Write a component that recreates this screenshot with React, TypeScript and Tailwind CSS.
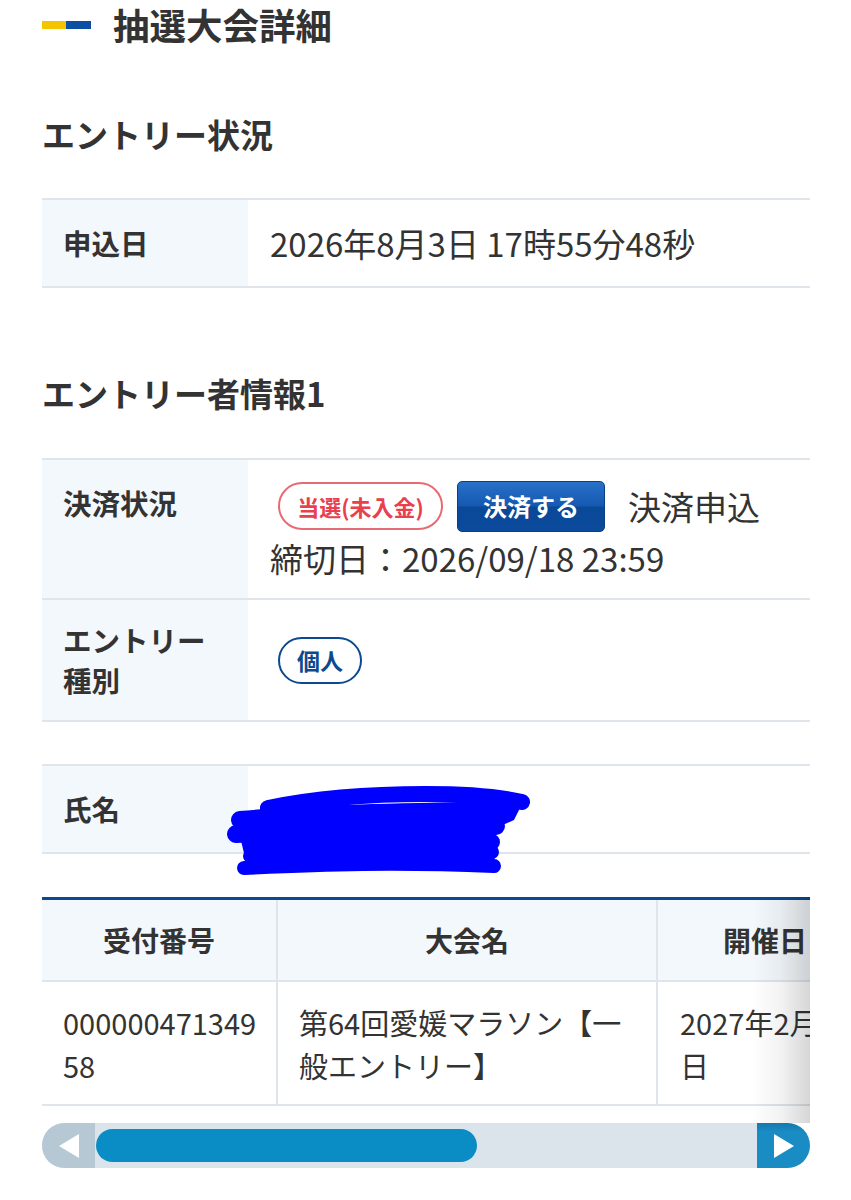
import React from "react";

const font = { fontFamily: '"Noto Sans CJK JP", "Noto Sans", sans-serif' };

function Scribble() {
  return (
    <svg
      className="absolute left-[184px] top-[18px] pointer-events-none"
      width="310"
      height="95"
      viewBox="0 0 310 95"
    >
      <g stroke="#0000ff" strokeLinecap="round" strokeLinejoin="round" fill="none">
        <path d="M42 24 C 90 14, 140 10, 200 10 C 240 10, 270 12, 296 18" strokeWidth="16" />
        <path d="M14 36 C 80 30, 180 28, 280 26" strokeWidth="18" />
        <path d="M10 50 C 90 44, 180 44, 270 42" strokeWidth="18" />
        <path d="M26 62 C 100 60, 190 58, 266 58" strokeWidth="16" />
        <path d="M24 72 C 100 70, 190 68, 266 68" strokeWidth="14" />
        <path d="M18 84 C 100 80, 170 78, 268 82" strokeWidth="14" />
      </g>
      <path
        d="M40 22 L296 20 L288 36 L270 44 L268 84 L22 86 L12 44 Z"
        fill="#0000ff"
      />
    </svg>
  );
}

export default function App() {
  return (
    <div className="bg-white w-[851px] min-h-[1200px] text-[#333]" style={font}>
      <div className="ml-[42px] w-[768px]">
        {/* Title */}
        <div className="flex items-center h-[50px]">
          <div className="flex h-[8px]">
            <div className="w-[24px] bg-[#f5c400]" />
            <div className="w-[25px] bg-[#0b4ea2]" />
          </div>
          <h1 className="ml-[22px] text-[36.5px] leading-[50px] font-bold">抽選大会詳細</h1>
        </div>

        {/* Entry status */}
        <h2 className="mt-[60px] text-[33px] leading-[48px] font-bold">エントリー状況</h2>
        <div className="mt-[40px] border-y-2 border-[#dfe5ea] flex">
          <div className="w-[206px] shrink-0 bg-[#f3f8fc] px-[21px] py-[23px] text-[28.5px] leading-[40px] font-bold">
            申込日
          </div>
          <div className="flex items-center pl-[22px] text-[33px] leading-[40px]">
            2026年8月3日 17時55分48秒
          </div>
        </div>

        {/* Entry person */}
        <h2 className="mt-[81px] text-[33px] leading-[48px] font-bold">エントリー者情報1</h2>
        <div className="mt-[41px] border-t-2 border-[#dfe5ea]">
          <div className="flex border-b-2 border-[#dfe5ea] h-[140px]">
            <div className="w-[206px] shrink-0 bg-[#f3f8fc] px-[21px] pt-[23px] text-[28.5px] leading-[40px] font-bold">
              決済状況
            </div>
            <div className="flex flex-col justify-center pl-[22px]">
              <div className="flex items-center">
                <span className="ml-[8px] w-[165px] h-[48px] rounded-full border-2 border-[#e86a73] text-[#e8404e] text-[22px] font-bold flex items-center justify-center">
                  当選(未入金)
                </span>
                <span className="ml-[14px] w-[148px] h-[51px] rounded-[5px] border border-[#0a3f85] bg-[linear-gradient(to_bottom,#2870c8_0%,#1659b2_48%,#0a4898_52%,#0b4a9c_100%)] text-white text-[24px] font-bold flex items-center justify-center">
                  決済する
                </span>
                <span className="ml-[23px] text-[33px] leading-[40px]">決済申込</span>
              </div>
              <div className="mt-[6px] text-[33px] leading-[40px]">締切日：2026/09/18 23:59</div>
            </div>
          </div>
          <div className="flex border-b-2 border-[#dfe5ea] h-[122px]">
            <div className="w-[206px] shrink-0 bg-[#f3f8fc] px-[21px] pt-[20px] text-[28.5px] leading-[40px] font-bold">
              エントリー
              <br />
              種別
            </div>
            <div className="flex items-center pl-[22px]">
              <span className="ml-[8px] w-[84px] h-[47px] rounded-full border-2 border-[#0b4a8f] text-[#0b4a8f] text-[23px] font-bold flex items-center justify-center">
                個人
              </span>
            </div>
          </div>
        </div>

        {/* Name */}
        <div className="relative mt-[42px] border-y-2 border-[#dfe5ea] flex">
          <div className="w-[206px] shrink-0 bg-[#f3f8fc] px-[21px] py-[23px] text-[28.5px] leading-[40px] font-bold">
            氏名
          </div>
          <div className="flex-1" />
          <Scribble />
        </div>

        {/* Table */}
        <div className="relative mt-[43px]">
          <div className="overflow-hidden border-t-[3px] border-[#0b4a8f]">
            <table className="table-fixed border-collapse w-[1100px]">
              <colgroup>
                <col className="w-[235px]" />
                <col className="w-[380px]" />
                <col className="w-[216px]" />
                <col className="w-[269px]" />
              </colgroup>
              <thead>
                <tr className="bg-[#f3f8fc] border-b-2 border-[#dfe5ea]">
                  <th className="h-[81px] text-center text-[28px] leading-[40px] font-bold border-r-2 border-[#dfe5ea]">受付番号</th>
                  <th className="text-center text-[28px] leading-[40px] font-bold border-r-2 border-[#dfe5ea]">大会名</th>
                  <th className="text-center text-[28px] leading-[40px] font-bold border-r-2 border-[#dfe5ea]">開催日</th>
                  <th className="text-center text-[28px] leading-[40px] font-bold">金額</th>
                </tr>
              </thead>
              <tbody>
                <tr className="border-b-2 border-[#dfe5ea]">
                  <td className="h-[124px] align-top pl-[21px] pt-[19px] text-[29px] leading-[43px] border-r-2 border-[#dfe5ea]">
                    000000471349
                    <br />
                    58
                  </td>
                  <td className="align-top pl-[21px] pt-[19px] text-[29px] leading-[43px] border-r-2 border-[#dfe5ea]">
                    第64回愛媛マラソン【一
                    <br />
                    般エントリー】
                  </td>
                  <td className="align-top pl-[22px] pt-[19px] text-[29px] leading-[43px] border-r-2 border-[#dfe5ea]">
                    2027年2月7
                    <br />
                    日
                  </td>
                  <td className="align-top pl-[22px] pt-[19px] text-[29px] leading-[43px]">12,000円</td>
                </tr>
              </tbody>
            </table>
          </div>

          {/* Scrollbar */}
          <div className="mt-[17px] h-[45px] rounded-full overflow-hidden bg-[#dbe4ea] flex items-center">
            <div className="w-[53px] h-full bg-[#b5c8d4] flex items-center justify-center">
              <svg width="24" height="26" viewBox="0 0 24 26">
                <polygon points="22,1 22,25 2,13" fill="#fff" />
              </svg>
            </div>
            <div className="ml-[1px] w-[381px] h-[33px] rounded-full bg-[#0a8dc4]" />
            <div className="flex-1" />
            <div className="w-[53px] h-full bg-[linear-gradient(to_bottom,#1479ad_0%,#1a8cc4_20%,#1a8cc4_100%)] flex items-center justify-center">
              <svg width="24" height="26" viewBox="0 0 24 26">
                <polygon points="2,1 2,25 22,13" fill="#fff" />
              </svg>
            </div>
          </div>

          <div className="absolute right-0 top-0 w-[58px] h-[226px] pointer-events-none bg-[linear-gradient(to_right,rgba(0,0,0,0)_0%,rgba(0,0,0,0.05)_50%,rgba(0,0,0,0.16)_100%)]" />
        </div>
      </div>
    </div>
  );
}
